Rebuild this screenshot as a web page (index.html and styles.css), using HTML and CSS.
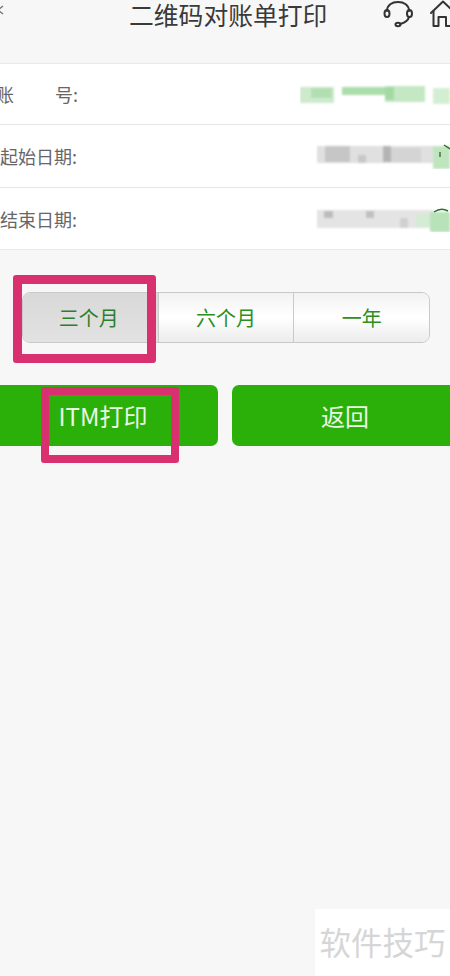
FILE: index.html
```html
<!DOCTYPE html>
<html lang="zh-CN">
<head>
  <meta charset="UTF-8">
  <meta name="viewport" content="width=device-width, initial-scale=1.0">
  <title>二维码对账单打印</title>
  <link rel="stylesheet" href="styles.css">
</head>
<body>
  <div class="page">
    <!-- Header -->
    <div class="header">
      <svg class="back" width="4" height="10" viewBox="0 0 4 10"><path d="M3 1 L-2 5 L3 9" fill="none" stroke="#777" stroke-width="1.5"/></svg>
      <div class="title">二维码对账单打印</div>
      <div class="header-icons">
        <svg width="30" height="28" viewBox="0 0 30 28" fill="none" stroke="#333" stroke-width="2" stroke-linecap="round">
          <path d="M4 11 C4 5 9 2 15 2 C21 2 26 5 26 11"/>
          <ellipse cx="4" cy="13.500" rx="2.500" ry="3.500"/>
          <ellipse cx="26.500" cy="13.500" rx="2.500" ry="3.500"/>
          <path d="M26 17 C25 21 21 23 17 24"/>
          <ellipse cx="15" cy="24.500" rx="2.500" ry="1.800"/>
        </svg>
        <svg width="26" height="28" viewBox="0 0 26 28" fill="none" stroke="#333" stroke-width="2" stroke-linejoin="round" stroke-linecap="round">
          <path d="M1 13 L13 1.500 L25 13"/>
          <path d="M3.500 11 V26 H8.500 V17 H16 V26 H21.500 V11"/>
        </svg>
      </div>
    </div>

    <!-- Form rows -->
    <div class="form">
      <div class="row row-first">
        <span class="label label-account"><span>账</span><span>号:</span></span>
        <svg class="mosaic" width="150" height="24" viewBox="0 0 150 24">
          <defs><filter id="soft"><feGaussianBlur stdDeviation="1"/></filter></defs>
          <g filter="url(#soft)">
            <rect x="0" y="5" width="34" height="16" fill="#cdeacd"/>
            <rect x="11" y="6" width="21" height="10" fill="#b2dfb2"/>
            <rect x="42" y="5" width="43" height="8" fill="#aaddaa"/>
            <rect x="85" y="4" width="40" height="16" fill="#c4e7c4"/>
            <rect x="85" y="5" width="9" height="13" fill="#a4d9a4"/>
            <rect x="133" y="6" width="17" height="16" fill="#d4eed4"/>
          </g>
        </svg>
      </div>
      <div class="row row-second">
        <span class="label">起始日期:</span>
        <svg class="mosaic" width="134" height="26" viewBox="0 0 134 26">
          <g filter="url(#soft)">
            <rect x="1" y="3" width="116" height="17" fill="#e0e0e0"/>
            <rect x="9" y="3" width="25" height="16" fill="#c6c6c6"/>
            <rect x="42" y="12" width="8" height="8" fill="#c8c8c8"/>
            <rect x="67" y="3" width="8" height="16" fill="#b4b4b4"/>
            <rect x="75" y="5" width="30" height="14" fill="#d4d4d4"/>
            <rect x="117" y="3" width="17" height="23" fill="#bfe5bf"/>
          </g>
          <path d="M124 9 V14" stroke="#3c7a3c" stroke-width="1.500"/>
          <path d="M128 2 L134 6" stroke="#2e6e2e" stroke-width="1.500" fill="none"/>
        </svg>
      </div>
      <div class="row">
        <span class="label">结束日期:</span>
        <svg class="mosaic" width="134" height="26" viewBox="0 0 134 26">
          <g filter="url(#soft)">
            <rect x="1" y="4" width="116" height="18" fill="#e4e4e4"/>
            <rect x="8" y="5" width="9" height="7" fill="#bcbcbc"/>
            <rect x="50" y="5" width="8" height="7" fill="#c0c0c0"/>
            <rect x="84" y="12" width="8" height="10" fill="#d0d0d0"/>
            <rect x="114" y="6" width="20" height="20" fill="#b8e2b8"/>
            <rect x="100" y="8" width="14" height="13" fill="#d4ebd4"/>
          </g>
          <path d="M118 6 Q125 1 132 5" stroke="#2e6e2e" stroke-width="1.500" fill="none"/>
        </svg>
      </div>
    </div>

    <!-- Period selector -->
    <div class="segments">
      <div class="segment active">三个月</div>
      <div class="segment">六个月</div>
      <div class="segment">一年</div>
    </div>

    <!-- Buttons -->
    <div class="actions">
      <div class="btn">ITM打印</div>
      <div class="btn">返回</div>
    </div>

    <!-- Overlays -->
    <div class="mark mark-period"></div>
    <div class="mark mark-print"></div>
    <div class="watermark">软件技巧</div>
  </div>
</body>
</html>
```

FILE: styles.css
```css
body {
  margin: 0;
  background-color: #f7f7f7;
  font-family: "Noto Sans CJK SC", "Noto Sans", sans-serif;
}

.page {
  position: relative;
  width: 450px;
  height: 976px;
  overflow: hidden;
}

/* Header */
.header {
  display: flex;
  align-items: flex-start;
  height: 63px;
}
.back {
  margin-top: 5px;
  flex-shrink: 0;
}
.title {
  margin-left: 125px;
  font-size: 24.8px;
  line-height: 28px;
  color: #3a3a3a;
  white-space: nowrap;
}
.header-icons {
  display: flex;
  gap: 17px;
  margin-left: 56px;
  flex-shrink: 0;
}

/* Form rows */
.form {
  background-color: #fff;
  border-top: 1px solid #e9e9e9;
  border-bottom: 1px solid #e9e9e9;
}
.row {
  display: flex;
  align-items: center;
  justify-content: space-between;
  height: 61px;
  border-bottom: 1px solid #e6e6e6;
}
.row-first {
  height: 60px;
}
.row-second {
  height: 62px;
}
.row:last-child {
  border-bottom: none;
}
.label {
  font-size: 18px;
  line-height: 24px;
  color: #666;
  white-space: nowrap;
}
.label-account {
  display: flex;
  justify-content: space-between;
  width: 82px;
  margin-left: -4px;
}
.mosaic {
  flex-shrink: 0;
}

/* Period selector */
.segments {
  display: flex;
  height: 49px;
  margin: 42px 20px 0 22px;
  border: 1px solid #c9c9c9;
  border-radius: 8px;
  overflow: hidden;
}
.segment {
  flex: 1;
  display: flex;
  align-items: center;
  justify-content: center;
  font-size: 20px;
  color: #2c8f22;
  background: linear-gradient(#f2f2f2, #ffffff 50%, #ececec);
  border-left: 1px solid #c9c9c9;
}
.segment:first-child {
  border-left: none;
}
.segment.active {
  background: linear-gradient(#d9d9d9, #e2e2e2);
  color: #2d7f2d;
  text-indent: -3px;
}

/* Buttons */
.actions {
  display: flex;
  gap: 14px;
  margin: 42px -10px 0 -10px;
}
.btn {
  flex: 1;
  display: flex;
  align-items: center;
  justify-content: center;
  height: 61px;
  border-radius: 7px;
  background-color: #2bb00a;
  color: #e9f8e4;
  font-size: 24px;
  text-indent: -2px;
}

/* Pink highlight boxes drawn over the page */
.mark {
  position: absolute;
  box-sizing: border-box;
  border: 9px solid #d9316f;
  border-radius: 3px;
}
.mark-period {
  left: 13px;
  top: 275px;
  width: 143px;
  height: 88px;
}
.mark-print {
  left: 41px;
  top: 387px;
  width: 138px;
  height: 76px;
  border-width: 8px;
}

.watermark {
  position: absolute;
  right: 0;
  bottom: 0;
  box-sizing: border-box;
  width: 135px;
  height: 67px;
  padding-bottom: 4px;
  display: flex;
  align-items: center;
  justify-content: center;
  background-color: #fff;
  color: #d6d6d6;
  font-size: 31.5px;
  white-space: nowrap;
}
```
